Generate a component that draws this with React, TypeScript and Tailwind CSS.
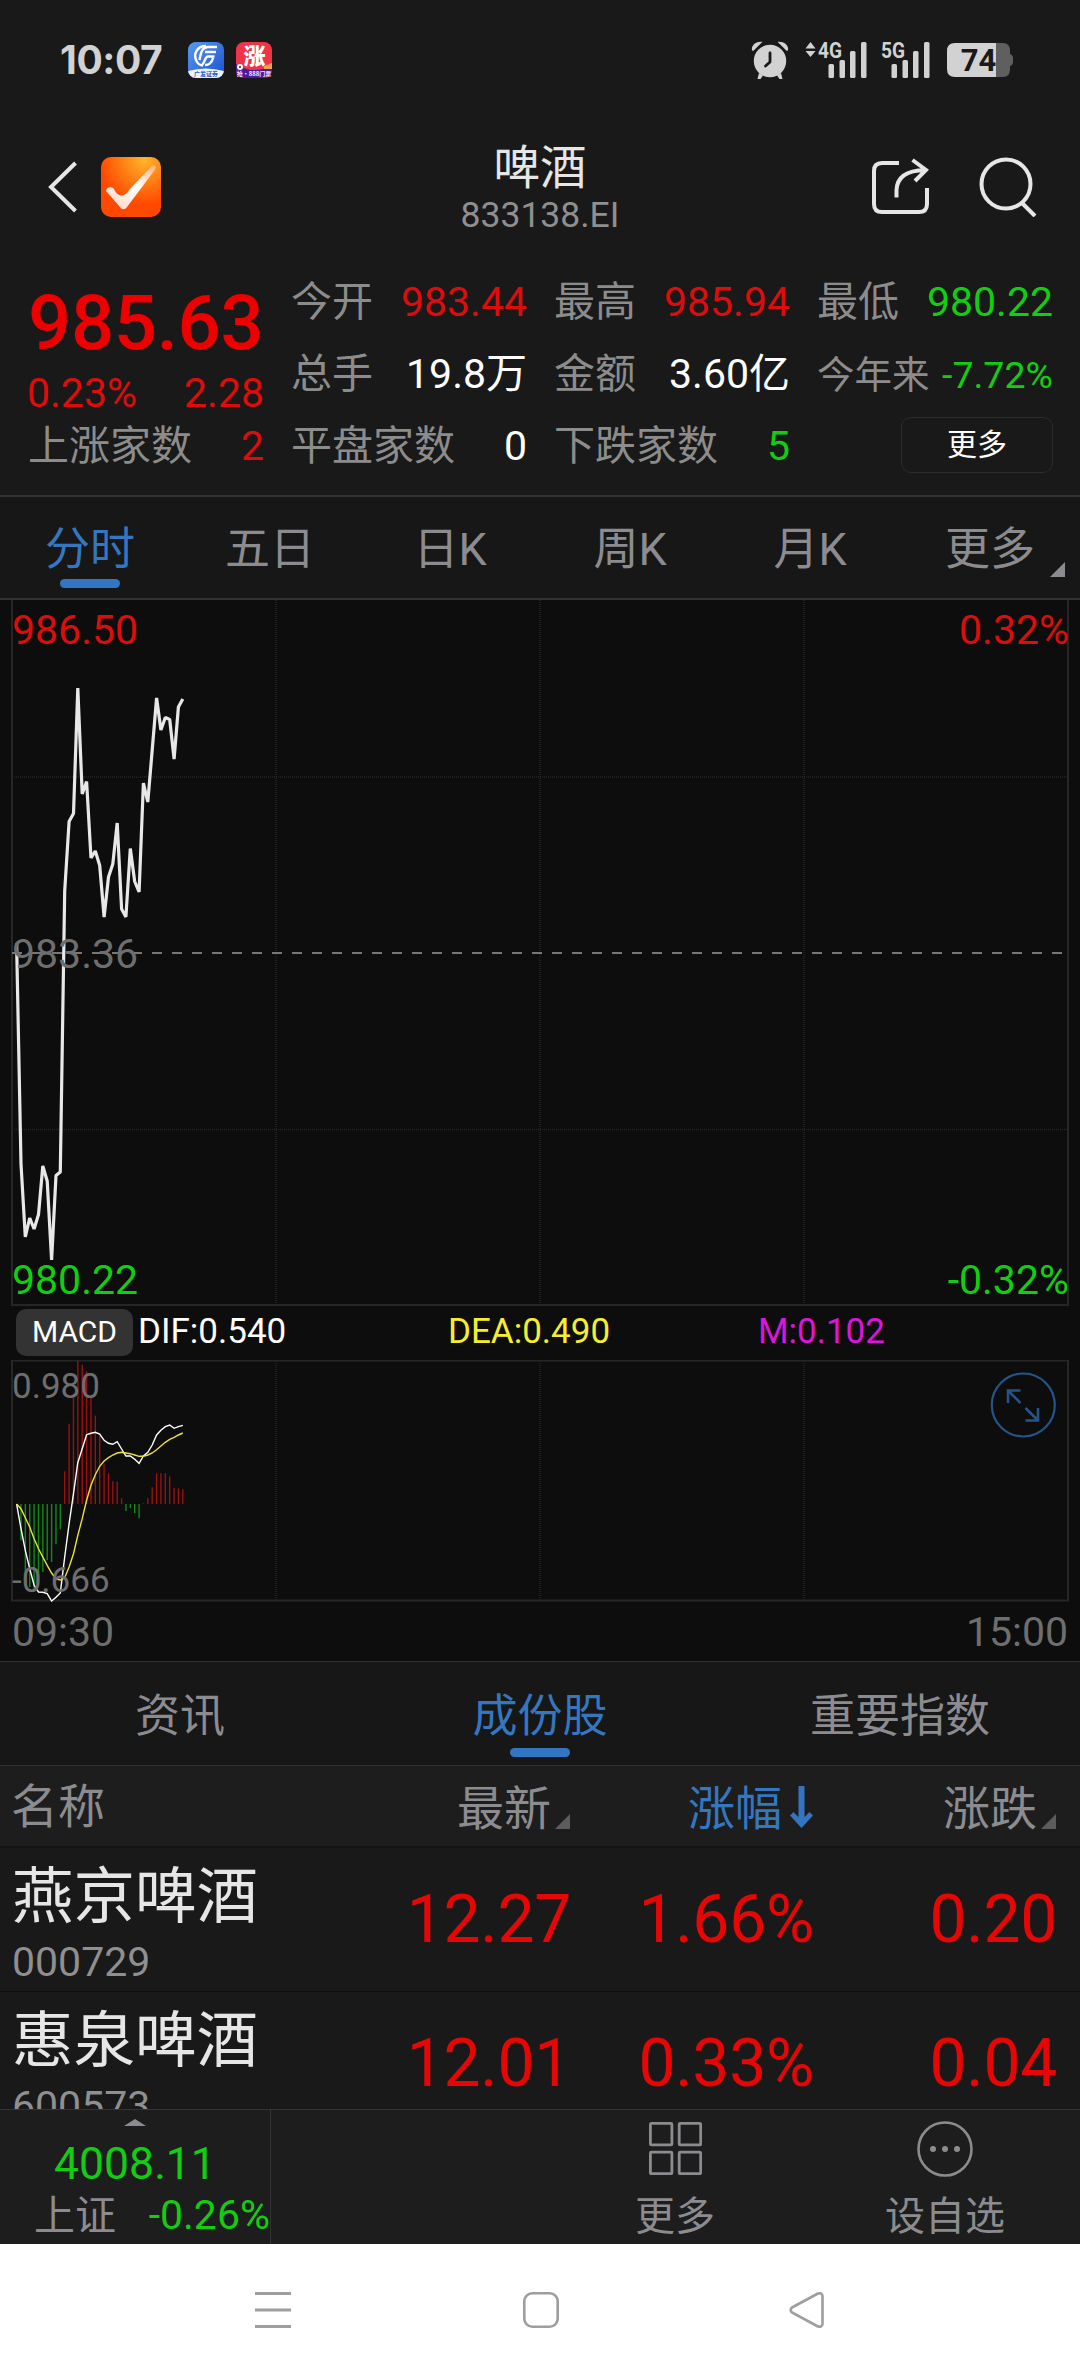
import React from 'react';
import { clsx } from 'clsx';

const periods = ['分时', '五日', '日K', '周K', '月K', '更多'];
const sections = ['资讯', '成份股', '重要指数'];

const stocks = [
  { name: '燕京啤酒', code: '000729', price: '12.27', pct: '1.66%', diff: '0.20' },
  { name: '惠泉啤酒', code: '600573', price: '12.01', pct: '0.33%', diff: '0.04' },
];

// One sample per minute, vertical position inside the 706px price panel
const priceLine = [
  343.5, 564, 637, 618, 629, 614.5, 566, 581, 660, 575.5, 572, 291, 221.5, 213.5, 88, 194, 181.5, 258, 251, 265.5,
  317, 277, 264, 223, 309, 317, 248.5, 281.5, 292, 183, 202, 150, 98, 130, 117.5, 119.5, 159, 107, 99,
];

// MACD series, three units per pixel, measured from the zero line
const macdBars = [
  0, -109, -204, -249, -262, -240, -204, -169, -174, -121, -76, 98, 241, 331, 429, 418, 398, 321, 265, 204, 119, 92,
  68, 67, 17, -21, -12, -27, -43, 2, 17, 50, 92, 92, 92, 83, 49, 47, 44,
];
const dif = [
  0, -74, -139, -194, -244, -264, -265, -269, -291, -280, -267, -159, -59, 31, 124, 166, 208, 212, 215, 210, 191,
  182, 179, 187, 165, 144, 144, 134, 122, 144, 155, 177, 207, 221, 232, 237, 227, 232, 236,
];
const dea = [
  0, -14, -41, -69, -104, -134, -159, -184, -207, -225, -228, -221, -189, -149, -94, -44, 11, 56, 88, 113, 129, 139,
  147, 153, 155, 153, 151, 147, 143, 143, 147, 153, 163, 174, 185, 194, 200, 207, 213,
];

const ZERO_Y = 144;
const sampleX = (i: number) => 16.6 + i * 4.374;
const toPoints = (ys: number[]) => ys.map((y, i) => `${sampleX(i).toFixed(1)},${y.toFixed(1)}`).join(' ');
const macdY = (v: number) => ZERO_Y - v / 3;

const Corner = ({ className }: { className?: string }) => (
  <svg viewBox="0 0 15 15" className={clsx('w-[15px] h-[15px]', className)} fill="currentColor">
    <path d="M15 0V15H0Z" />
  </svg>
);

const Signal = ({ label, arrows }: { label: string; arrows?: boolean }) => (
  <svg viewBox="0 0 64 38" className="w-[64px] h-[38px] overflow-visible" fill="#d2d2d2">
    {arrows && <path d="M0.5 7.5L5.5 1L10.5 7.5ZM0.5 10H10.5L5.5 16Z" />}
    <text
      x="13"
      y="17"
      textLength="24"
      lengthAdjust="spacingAndGlyphs"
      fontSize="22"
      fontWeight="700"
      fontFamily="Roboto, sans-serif"
    >
      {label}
    </text>
    <rect x="23.5" y="23" width="5.5" height="14" rx="1.5" />
    <rect x="34.5" y="19" width="5.5" height="18" rx="1.5" />
    <rect x="45" y="10" width="5.5" height="27" rx="1.5" />
    <rect x="56" y="1" width="5.5" height="36" rx="1.5" />
  </svg>
);

const StatusBar = () => (
  <div className="h-[120px] pl-[60px] pr-[66px] flex items-center justify-between">
    <div className="flex items-center">
      <span className="w-[128px] font-['Inter'] font-bold text-[39px] leading-10 tracking-[-0.4px] text-[#d2d2d2]">10:07</span>
      <svg viewBox="0 0 36 36" className="w-[36px] h-[36px] mr-3 overflow-visible">
        <defs>
          <clipPath id="gf">
            <rect width="36" height="36" rx="8" />
          </clipPath>
          <linearGradient id="gfBg" x1="0" y1="0" x2="1" y2="1">
            <stop offset="0" stopColor="#5a9af0" />
            <stop offset="1" stopColor="#1c50d0" />
          </linearGradient>
        </defs>
        <g clipPath="url(#gf)">
          <rect width="36" height="36" fill="url(#gfBg)" />
          <path d="M0 29Q18 24 36 29V36H0Z" fill="#eef4ff" />
        </g>
        <g fill="none" stroke="#fff" strokeWidth="2.400">
          <path d="M18 4C9 4 5 12 8.500 19C10 22 13 23.500 15 23.500" />
          <path d="M29 5H20C15 5 13 9 11.500 18M28 10H17M26.500 14.500H20C17 14.500 17 20 14 23M25 16C24 20 21 23 17 23" />
        </g>
        <text x="18" y="34" textAnchor="middle" fontSize="6" fontWeight="700" fill="#2c62c8" fontFamily="'Noto Sans CJK SC', sans-serif">
          广发证券
        </text>
      </svg>
      <svg viewBox="0 0 36 36" className="w-[36px] h-[36px] overflow-visible">
        <defs>
          <clipPath id="zt">
            <rect width="36" height="36" rx="8" />
          </clipPath>
        </defs>
        <g clipPath="url(#zt)">
          <rect width="36" height="36" fill="#f03448" />
          <path d="M0 22Q9 28 18 28T36 24V36H0Z" fill="#4a1ba0" />
          <path d="M28 24L36 21V27H28Z" fill="#f4a04a" />
          <circle cx="4" cy="25" r="3" fill="#fff" />
          <circle cx="4" cy="25" r="1" fill="#222" />
        </g>
        <text x="18.500" y="22" textAnchor="middle" fontSize="22" fontWeight="900" fill="#fff" fontFamily="'Noto Sans CJK SC', sans-serif">
          涨
        </text>
        <text x="18" y="34" textAnchor="middle" fontSize="6" fontWeight="700" fill="#fbe3ff" fontFamily="'Noto Sans CJK SC', sans-serif">
          抢·888门票
        </text>
      </svg>
    </div>
    <div className="flex items-center">
      <svg viewBox="0 0 38 38" className="w-[38px] h-[38px] mr-4">
        <g fill="#d2d2d2">
          <circle cx="19" cy="20" r="16.200" />
          <path d="M1 9.500C0 4 5 0 11.500 0.800L2.500 9.800ZM37 9.500C38 4 33 0 26.500 0.800L35.500 9.800Z" />
          <path d="M8 32L12 34.500L9.500 38H6.500ZM30 32L26 34.500L28.500 38H31.500Z" />
        </g>
        <path d="M19 12V21L14.500 25" fill="none" stroke="#191919" strokeWidth="2.800" strokeLinecap="round" strokeLinejoin="round" />
      </svg>
      <Signal label="4G" arrows />
      <div className="-ml-px mr-[15px]">
        <Signal label="5G" />
      </div>
      <svg viewBox="0 0 67 34" className="w-[67px] h-[34px] overflow-visible">
        <path d="M49 0H56Q63 0 63 8V11Q66 12 66 15V19Q66 22 63 23V26Q63 34 56 34H49Z" fill="#5f5f5f" />
        <path d="M8 0H49V34H8Q0 34 0 26V8Q0 0 8 0Z" fill="#d2d2d2" />
        <text x="31.500" y="28" textAnchor="middle" fontSize="31" fontWeight="700" fill="#191919" fontFamily="Roboto, sans-serif">
          74
        </text>
      </svg>
    </div>
  </div>
);

const Header = () => (
  <div className="h-[134px] pl-[48px] pr-[43px] flex items-center">
    <div className="w-[414px] flex items-center">
      <svg viewBox="0 0 29 52" className="w-[29px] h-[52px] mr-6" fill="none" stroke="#e6e6e6" strokeWidth="4">
        <path d="M27.500 2L3 26L27.500 50" />
      </svg>
      <svg viewBox="0 0 60 60" className="w-[60px] h-[60px]">
        <defs>
          <radialGradient id="logoBg" cx="0.72" cy="0.05" r="0.75">
            <stop offset="0" stopColor="#ffb52a" />
            <stop offset="1" stopColor="#ff4800" />
          </radialGradient>
          <linearGradient id="logoTick" x1="1" y1="0" x2="0.3" y2="1">
            <stop offset="0" stopColor="#ffb377" />
            <stop offset="0.5" stopColor="#fff" />
            <stop offset="1" stopColor="#ffdccc" />
          </linearGradient>
        </defs>
        <rect width="60" height="60" rx="10" fill="url(#logoBg)" />
        <path d="M5 34C5 30 11 29 13 32C15 36 17 38.500 21 38.500C24 38.500 26 36 29 32L50 10C53 7 56 9 54.500 12L26 50C24 53 21 53 19 50Z" fill="url(#logoTick)" />
      </svg>
    </div>
    <div className="w-[156px] flex flex-col items-center mt-[6px]">
      <span className="text-[46.500px] leading-[50px] text-[#e6e6e6]">啤酒</span>
      <span className="text-[35.500px] leading-[45px] text-[#8f8f8f]">833138.EI</span>
    </div>
    <div className="flex-1 flex items-center justify-end">
      <svg viewBox="0 0 58 58" className="w-[58px] h-[58px] mr-[50px]" fill="none" stroke="#e6e6e6" strokeWidth="4">
        <path d="M28 5H11Q3 5 3 13V46Q3 54 11 54H48Q56 54 56 46V30" />
        <path d="M25.500 39.500V32C26 20 34 12.500 54 12M41.500 2L55 12L44 23" />
      </svg>
      <svg viewBox="0 0 58 60" className="w-[58px] h-[60px]" fill="none" stroke="#e6e6e6" strokeWidth="4">
        <circle cx="27" cy="27" r="24.500" />
        <path d="M43 46L56 59" />
      </svg>
    </div>
  </div>
);

interface CellProps {
  label: string;
  value: string;
  tone: string;
  small?: boolean;
}

const Cell: React.FC<CellProps> = ({ label, value, tone, small }) => (
  <div className={clsx('h-[72px] flex items-center justify-between whitespace-nowrap', small ? 'text-[37.500px]' : 'text-[41px]')}>
    <span className="text-[#8c8c8c]">{label}</span>
    <span className={tone}>{value}</span>
  </div>
);

const Quote = () => (
  <div className="h-[241px] pt-[13px] pl-[28px] pr-[27px] grid grid-cols-4 gap-x-[27px] items-start">
    <div>
      <div className="h-[110px] pt-[2px] flex items-center text-[76px] tracking-[-0.3px] font-medium text-[#ee0000]">985.63</div>
      <div className="h-[34px] -ml-px leading-8 flex justify-between text-[41px] text-[#de0c0c]">
        <span>0.23%</span>
        <span>2.28</span>
      </div>
      <Cell label="上涨家数" value="2" tone="text-[#de0c0c]" />
    </div>
    <div>
      <Cell label="今开" value="983.44" tone="text-[#de0c0c]" />
      <Cell label="总手" value="19.8万" tone="text-white" />
      <Cell label="平盘家数" value="0" tone="text-white" />
    </div>
    <div>
      <Cell label="最高" value="985.94" tone="text-[#de0c0c]" />
      <Cell label="金额" value="3.60亿" tone="text-white" />
      <Cell label="下跌家数" value="5" tone="text-[#12ce12]" />
    </div>
    <div>
      <Cell label="最低" value="980.22" tone="text-[#12ce12]" />
      <Cell label="今年来" value="-7.72%" tone="text-[#12ce12]" small />
      <div className="h-[72px] flex items-center justify-end">
        <button className="w-[152px] h-[56px] -mt-1 rounded-[10px] border border-[#2b2b2b] text-[30px] leading-none text-white">更多</button>
      </div>
    </div>
  </div>
);

const PeriodTabs = () => (
  <div className="h-[105px] grid grid-cols-6 bg-[#171717] border-y-2 border-[#323232] relative">
    {periods.map((p, i) => (
      <div key={p} className={clsx('flex flex-col items-center pt-[24px] text-[45px]', i === 0 ? 'text-[#3477c0]' : 'text-[#8c8c90]')}>
        <span className="leading-[58px]">{p}</span>
        {i === 0 && <span className="w-[60px] h-[9px] rounded-full bg-[#3276c3]" />}
      </div>
    ))}
    <Corner className="absolute left-[1050px] top-[65px] text-[#8c8c90]" />
  </div>
);

const PriceChart = () => (
  <div className="relative h-[706px] leading-none text-[41px]">
    <svg viewBox="0 0 1080 706" className="w-full h-full" fill="none">
      <path d="M12 0V705H1068V0" stroke="#262626" strokeWidth="2" />
      <path d="M276 0V705M540 0V705M804 0V705M12 177H1068M12 529.500H1068" stroke="#242424" strokeWidth="1.500" strokeDasharray="1 1" />
      <path d="M12 353H1068" stroke="#777" strokeWidth="2" strokeDasharray="10 10" />
      <polyline points={toPoints(priceLine)} stroke="#e8e8e8" strokeWidth="3.200" strokeLinejoin="bevel" />
    </svg>
    <span className="absolute left-3 top-[10px] text-[#de0c0c]">986.50</span>
    <span className="absolute right-[11px] top-[10px] text-[#de0c0c]">0.32%</span>
    <span className="absolute left-3 top-[334px] text-[#6e6e6e]">983.36</span>
    <span className="absolute left-3 top-[660px] text-[#12ce12]">980.22</span>
    <span className="absolute right-[11px] top-[660px] text-[#12ce12]">-0.32%</span>
  </div>
);

const MacdLegend = () => (
  <div className="h-[54px] pl-[16px] flex items-center text-[35px] leading-none">
    <span className="w-[117px] h-[47px] mt-[-2px] mr-[5px] rounded-[10px] bg-[#333] flex items-center justify-center text-[30px] text-white">
      MACD
    </span>
    <span className="w-[310px] -mt-1 text-white">DIF:0.540</span>
    <span className="w-[310px] -mt-1 text-[#f7ed30]">DEA:0.490</span>
    <span className="-mt-1 text-[#dc14dc]">M:0.102</span>
  </div>
);

const MacdChart = () => (
  <div className="relative h-[242px] leading-none text-[35px]">
    <svg viewBox="0 0 1080 242" className="w-full h-full" fill="none">
      <path d="M12 0.500H1068V240.500H12Z" stroke="#262626" strokeWidth="2" />
      <path d="M276 1V241M540 1V241M804 1V241" stroke="#242424" strokeWidth="1.500" strokeDasharray="1 1" />
      {macdBars.map((v, i) => (
        <path key={i} d={`M${sampleX(i)} ${ZERO_Y}V${macdY(v)}`} stroke={v > 0 ? '#9c1111' : '#128a18'} strokeWidth="1.400" />
      ))}
      <polyline points={toPoints(dif.map(macdY))} stroke="#fff" strokeWidth="1.400" />
      <polyline points={toPoints(dea.map(macdY))} stroke="#ece23c" strokeWidth="1.400" />
      <g stroke="#245488" strokeWidth="2.200">
        <circle cx="1023.300" cy="45" r="31.500" />
        <path d="M1020.500 43L1008.500 31M1008 43V30.500H1020.500M1025.500 48L1037.500 60M1038 48V60.500H1025.500" strokeWidth="2.600" />
      </g>
    </svg>
    <span className="absolute left-3 top-[9px] text-[#6e6e6e]">0.980</span>
    <span className="absolute left-3 top-[203px] text-[#6e6e6e]">-0.666</span>
  </div>
);

const SectionTabs = () => (
  <div className="h-[105px] grid grid-cols-3 bg-[#171717] border-y border-[#323232]">
    {sections.map((s, i) => (
      <div key={s} className={clsx('flex flex-col items-center pt-[24px] text-[45px]', i === 1 ? 'text-[#3477c0]' : 'text-[#8c8c90]')}>
        <span className="leading-[62px]">{s}</span>
        {i === 1 && <span className="w-[60px] h-[9px] rounded-full bg-[#3276c3]" />}
      </div>
    ))}
  </div>
);

const ListHeader = () => (
  <div className="h-[82px] pl-[11px] pr-[24px] flex bg-[#1d1d1d] border-b-2 border-[#131313] text-[47px] leading-[80px] text-[#8c8c90]">
    <span className="w-[316px] pt-px">名称</span>
    <div className="w-[243px] flex justify-end items-center pt-[5px]">
      最新
      <Corner className="ml-1 mt-[26px] text-[#5c5c5e]" />
    </div>
    <div className="w-[243px] flex justify-end items-center pt-[5px] text-[#3477c0]">
      涨幅
      <svg viewBox="0 0 23 42" className="w-[23px] h-[42px] ml-2 -mt-1" fill="#3276c3">
        <path d="M8.500 0H14.500V31L19.500 26L23 29.500L11.500 42L0 29.500L3.500 26L8.500 31Z" />
      </svg>
    </div>
    <div className="w-[243px] flex justify-end items-center pt-[5px]">
      涨跌
      <Corner className="ml-1 mt-[26px] text-[#5c5c5e]" />
    </div>
  </div>
);

const StockList = () => (
  <div className="h-[261px] overflow-hidden">
    {stocks.map((s) => (
      <div key={s.code} className="h-[144px] pl-[12px] pr-[23px] flex items-center border-b border-[#0e0e0e] text-[66px] tracking-[-0.3px] text-[#e60606]">
        <div className="w-[316px] h-full pt-[9px] flex flex-col tracking-normal">
          <span className="text-[61.500px] leading-[80px] text-[#e6e6e6]">{s.name}</span>
          <span className="text-[41px] leading-[51px] text-[#8f8f8f]">{s.code}</span>
        </div>
        <span className="w-[243px] text-right">{s.price}</span>
        <span className="w-[243px] text-right">{s.pct}</span>
        <span className="w-[243px] text-right">{s.diff}</span>
      </div>
    ))}
  </div>
);

const BottomBar = () => (
  <div className="h-[135px] flex bg-[#1d1d1d] border-t border-[#343434] text-[#8c8c90]">
    <div className="w-[271px] border-r border-[#343434] flex flex-col items-center pt-[9px]">
      <svg viewBox="0 0 22 7" className="w-[22px] h-[7px]" fill="currentColor">
        <path d="M0 7L11 0L22 7Z" />
      </svg>
      <span className="mt-[11px] text-[44.500px] leading-[54px] text-[#12ce12]">4008.11</span>
      <div className="w-full pl-[34px] flex justify-between text-[41px] leading-[50px]">
        <span>上证</span>
        <span className="-mt-px text-[#12ce12]">-0.26%</span>
      </div>
    </div>
    <div className="flex-1" />
    <div className="w-[268px] flex flex-col items-center pt-[12px] mr-px">
      <svg viewBox="0 0 53 53" className="w-[53px] h-[53px]" fill="none" stroke="currentColor" strokeWidth="2.800">
        <rect x="1.400" y="1.400" width="21.500" height="21.500" rx="1" />
        <rect x="30.200" y="1.400" width="21.500" height="21.500" rx="1" />
        <rect x="1.400" y="30.200" width="21.500" height="21.500" rx="1" />
        <rect x="30.200" y="30.200" width="21.500" height="21.500" rx="1" />
      </svg>
      <span className="mt-[17px] text-[40px] leading-[50px]">更多</span>
    </div>
    <div className="w-[270px] flex flex-col items-center pt-[11px]">
      <svg viewBox="0 0 56 56" className="w-[56px] h-[56px]" fill="none" stroke="currentColor" strokeWidth="2.600">
        <circle cx="28" cy="28" r="26.500" />
        <g fill="currentColor" stroke="none">
          <circle cx="16" cy="28" r="3" />
          <circle cx="28" cy="28" r="3" />
          <circle cx="40" cy="28" r="3" />
        </g>
      </svg>
      <span className="mt-[15px] text-[40px] leading-[50px]">设自选</span>
    </div>
  </div>
);

const SystemNav = () => (
  <div className="h-[132px] bg-white flex items-center justify-center text-[#9e9e9e]">
    <svg viewBox="0 0 36 36" className="w-[36px] h-[36px] mr-[232px]" stroke="currentColor" strokeWidth="3">
      <path d="M0 1.500H36M0 18H36M0 34.500H36" />
    </svg>
    <svg viewBox="0 0 36 36" className="w-[36px] h-[36px] mr-[230px]" fill="none" stroke="currentColor" strokeWidth="2.600">
      <rect x="1.300" y="1.300" width="33.400" height="33.400" rx="8" />
    </svg>
    <svg viewBox="0 0 36 36" className="w-[36px] h-[36px]" fill="none" stroke="currentColor" strokeWidth="2.600">
      <path d="M3 15.500L28 2C31 0.500 33.500 1.500 33.500 4V32C33.500 34.500 31 35.500 28 34L3 20.500Q0.500 18 3 15.500Z" />
    </svg>
  </div>
);

export default function App() {
  return (
    <div className="w-[1080px] h-[2376px] overflow-hidden bg-[#191919] font-['Roboto','Noto_Sans_CJK_SC',sans-serif]">
      <StatusBar />
      <Header />
      <Quote />
      <PeriodTabs />
      <div className="h-[1061px] bg-[#0d0d0d]">
        <PriceChart />
        <MacdLegend />
        <MacdChart />
        <div className="h-[59px] pt-px px-3 flex items-center justify-between text-[41px] leading-none text-[#6e6e6e]">
          <span>09:30</span>
          <span>15:00</span>
        </div>
      </div>
      <SectionTabs />
      <ListHeader />
      <StockList />
      <BottomBar />
      <SystemNav />
    </div>
  );
}
